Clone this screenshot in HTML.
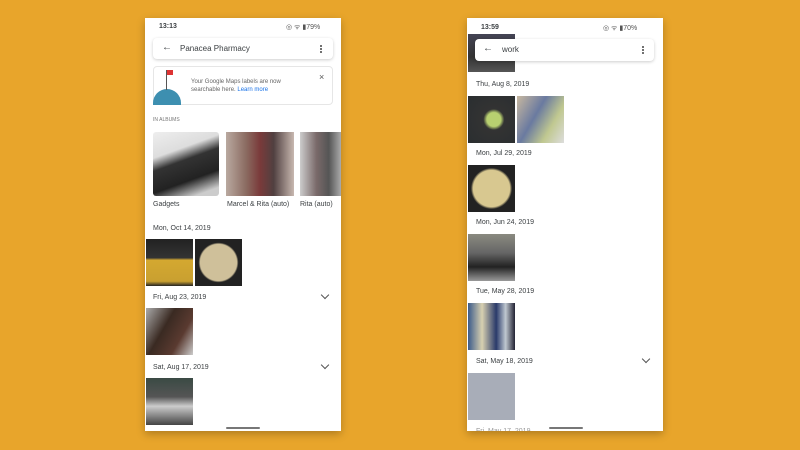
<!DOCTYPE html>
<html><head><style>
*{margin:0;padding:0;box-sizing:border-box}
body{width:800px;height:450px;background:#e8a52b;position:relative;overflow:hidden;font-family:"Liberation Sans",sans-serif;color:#3c4043}
.ph{position:absolute;top:18px;width:196px;height:413px;background:#fff;overflow:hidden;box-shadow:0 3px 8px rgba(0,0,0,.25)}
.a{position:absolute}
.t{position:absolute;font-size:7px;white-space:nowrap}
.bar{position:absolute;background:#fff;border-radius:4px;box-shadow:0 1px 3px rgba(0,0,0,.2)}
.img{position:absolute;width:47px;height:47px}
.chev{position:absolute;width:6px;height:6px;border-right:1.2px solid #555;border-bottom:1.2px solid #555;transform:rotate(45deg)}
.home{position:absolute;top:409px;width:34px;height:2px;background:#777;border-radius:1px}
.dots{position:absolute;width:2px;height:2px;background:#444;border-radius:50%;box-shadow:0 3px 0 #444,0 6px 0 #444}
</style></head><body>

<div class="ph" style="left:145px">
  <div class="t" style="left:14px;top:5px;font-weight:bold;font-size:7px">13:13</div>
  <div class="t" style="left:141px;top:5px;font-size:7px;color:#555">◎ ᯤ ▮79%</div>
  <div class="bar" style="left:8px;top:20px;width:180px;height:21px"></div>
  <div class="t" style="left:17px;top:24px;font-size:10px">←</div>
  <div class="t" style="left:35px;top:26px;font-size:8px">Panacea Pharmacy</div>
  <div class="dots" style="left:175px;top:27px"></div>
  <div class="a" style="left:8px;top:48px;width:180px;height:39px;border:1px solid #e6e6e6;border-radius:4px"></div>
  <div class="a" style="left:8px;top:71px;width:28px;height:16px;background:#3d8fb0;border-radius:14px 14px 0 0"></div>
  <div class="a" style="left:22px;top:52px;width:6px;height:5px;background:#d33"></div>
  <div class="a" style="left:21px;top:52px;width:1px;height:20px;background:#555"></div>
  <div class="t" style="left:46px;top:60px;font-size:6px;color:#666;line-height:8px">Your Google Maps labels are now<br>searchable here. <span style="color:#1a73e8">Learn more</span></div>
  <div class="t" style="left:174px;top:54px;font-size:9px;color:#555">×</div>
  <div class="t" style="left:8px;top:99px;font-size:5px;color:#777">IN ALBUMS</div>
  <div class="a" style="left:8px;top:114px;width:66px;height:64px;border-radius:3px;background:linear-gradient(160deg,#eee 0%,#ddd 30%,#333 45%,#222 70%,#ccc 90%)"></div>
  <div class="a" style="left:81px;top:114px;width:68px;height:64px;background:linear-gradient(90deg,#b9a9a0,#8a6a60 30%,#7a3a3a 50%,#504040 70%,#c8b8b0)"></div>
  <div class="a" style="left:155px;top:114px;width:41px;height:64px;background:linear-gradient(90deg,#ccc,#7a6a6a 40%,#555 70%,#aaa)"></div>
  <div class="t" style="left:8px;top:183px">Gadgets</div>
  <div class="t" style="left:82px;top:183px">Marcel &amp; Rita (auto)</div>
  <div class="t" style="left:155px;top:183px">Rita (auto)</div>
  <div class="t" style="left:8px;top:207px">Mon, Oct 14, 2019</div>
  <div class="img" style="left:1px;top:221px;background:linear-gradient(#222 0%,#333 40%,#d4a830 45%,#c9a030 90%,#222)"></div>
  <div class="img" style="left:50px;top:221px;background:radial-gradient(circle,#cfc09a 55%,#222 60%)"></div>
  <div class="t" style="left:8px;top:276px">Fri, Aug 23, 2019</div>
  <div class="chev" style="left:177px;top:274px"></div>
  <div class="img" style="left:1px;top:290px;background:linear-gradient(120deg,#aaa,#3a2a22 40%,#5a3a30 70%,#ccc)"></div>
  <div class="t" style="left:8px;top:346px">Sat, Aug 17, 2019</div>
  <div class="chev" style="left:177px;top:344px"></div>
  <div class="img" style="left:1px;top:360px;background:linear-gradient(#3a4a44,#555 40%,#ccc 60%,#444)"></div>
  <div class="home" style="left:81px"></div>
</div>

<div class="ph" style="left:467px">
  <div class="img" style="left:1px;top:16px;height:38px;background:linear-gradient(#445,#333 60%,#555)"></div>
  <div class="t" style="left:14px;top:6px;font-weight:bold">13:59</div>
  <div class="t" style="left:136px;top:6px;color:#555">◎ ᯤ ▮70%</div>
  <div class="bar" style="left:8px;top:21px;width:179px;height:22px"></div>
  <div class="t" style="left:16px;top:25px;font-size:10px">←</div>
  <div class="t" style="left:35px;top:27px;font-size:8px">work</div>
  <div class="dots" style="left:175px;top:28px"></div>
  <div class="t" style="left:9px;top:63px">Thu, Aug 8, 2019</div>
  <div class="img" style="left:1px;top:78px;background:radial-gradient(circle at 55% 50%,#b8d070 20%,#333 30%,#2a2e30)"></div>
  <div class="img" style="left:50px;top:78px;background:linear-gradient(120deg,#c8b8a0,#6a7aa0 40%,#c0c890 70%,#ddd)"></div>
  <div class="t" style="left:9px;top:132px">Mon, Jul 29, 2019</div>
  <div class="img" style="left:1px;top:147px;background:radial-gradient(circle,#d8c890 55%,#222 62%)"></div>
  <div class="t" style="left:9px;top:201px">Mon, Jun 24, 2019</div>
  <div class="img" style="left:1px;top:216px;background:linear-gradient(#8a8a80,#666 40%,#222 70%,#999)"></div>
  <div class="t" style="left:9px;top:270px">Tue, May 28, 2019</div>
  <div class="img" style="left:1px;top:285px;background:linear-gradient(90deg,#3a5a8a,#d8d0b0 30%,#2a3a6a 60%,#c0c8d0 80%,#223)"></div>
  <div class="t" style="left:9px;top:340px">Sat, May 18, 2019</div>
  <div class="chev" style="left:176px;top:338px"></div>
  <div class="img" style="left:1px;top:355px;background:#a8adb8"></div>
  <div class="t" style="left:9px;top:410px;color:#999">Fri, May 17, 2019</div>
  <div class="home" style="left:82px"></div>
</div>
</body></html>
